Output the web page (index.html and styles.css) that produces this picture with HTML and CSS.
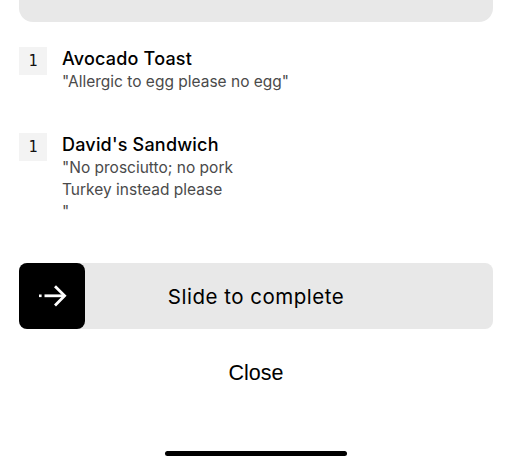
FILE: index.html
```html
<!DOCTYPE html>
<html>
<head>
<meta charset="utf-8">
<link rel="stylesheet" href="styles.css">
</head>
<body>
<div class="page">
  <div class="top-card"></div>
  <ul class="items">
    <li class="item">
      <span class="qty">1</span>
      <div class="info">
        <div class="name">Avocado Toast</div>
        <div class="note">"Allergic to egg please no egg"</div>
      </div>
    </li>
    <li class="item">
      <span class="qty">1</span>
      <div class="info">
        <div class="name">David's Sandwich</div>
        <div class="note">"No prosciutto; no pork<br>Turkey instead please<br>"</div>
      </div>
    </li>
  </ul>
  <div class="slider">
    <div class="knob">
      <svg width="30" height="24" viewBox="0 0 30 24">
        <rect x="1" y="10.5" width="2.6" height="2.6" fill="#fff"/>
        <path d="M6.5 11.8 H26" stroke="#fff" stroke-width="2.8" fill="none"/>
        <path d="M17 2.2 L26.6 11.8 L17 21.4" stroke="#fff" stroke-width="2.8" fill="none" stroke-linejoin="miter"/>
      </svg>
    </div>
    <div class="slider-label">Slide to complete</div>
  </div>
  <div class="close">Close</div>
  <div class="home-indicator"></div>
</div>
</body>
</html>
```

FILE: styles.css
```css
* { box-sizing: border-box; }
html, body { margin: 0; padding: 0; background: #fff; }
body {
  font-family: Inter, "Open Sans", "Liberation Sans", sans-serif;
  color: #000;
  width: 512px;
  height: 466px;
  overflow: hidden;
}
.page {
  padding: 0 19px;
  display: flex;
  flex-direction: column;
}
.top-card {
  height: 22px;
  background: #e8e8e8;
  border-radius: 0 0 14px 14px;
}
.items {
  list-style: none;
  margin: 25px 0 0;
  padding: 0;
  display: flex;
  flex-direction: column;
  gap: 40px;
}
.item {
  display: flex;
  gap: 15px;
  align-items: flex-start;
}
.qty {
  width: 28px;
  height: 28px;
  background: #f3f3f3;
  display: flex;
  align-items: center;
  justify-content: center;
  font-family: "DejaVu Sans Mono", "Liberation Mono", monospace;
  font-size: 15px;
  color: #111;
  flex: none;
}
.name {
  font-size: 18px;
  line-height: 24px;
  font-weight: 450;
  letter-spacing: 0.2px;
}
.note {
  font-size: 15.5px;
  line-height: 22px;
  color: #4a4a4a;
}
.slider {
  margin-top: 40px;
  height: 66px;
  background: #e8e8e8;
  border-radius: 8px;
  display: flex;
  align-items: center;
}
.knob {
  width: 66px;
  height: 66px;
  background: #000;
  border-radius: 8px;
  display: flex;
  align-items: center;
  justify-content: center;
  flex: none;
}
.knob svg { display: block; margin-left: 1px; }
.slider-label {
  flex: 1;
  text-align: center;
  font-size: 20.5px;
  margin-right: 66px;
  letter-spacing: 0.5px;
}
.close {
  margin-top: 32px;
  text-align: center;
  font-family: "Liberation Sans", Arial, sans-serif;
  font-size: 21.5px;
  line-height: 24px;
}
.home-indicator {
  align-self: center;
  margin-top: 66px;
  width: 182px;
  height: 5px;
  border-radius: 3px;
  background: #000;
}
```
